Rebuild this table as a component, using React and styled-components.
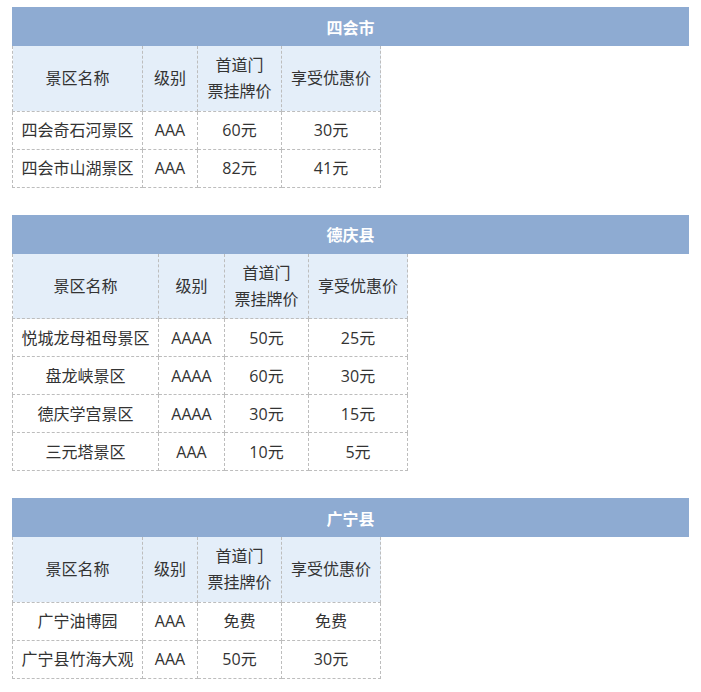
import React from 'react';
import styled, { createGlobalStyle } from 'styled-components';

const GlobalStyle = createGlobalStyle`
  body {
    margin: 0;
    background: #fff;
    font-family: "Open Sans", "Noto Sans CJK SC", sans-serif;
    color: #333;
  }
`;

const Page = styled.div`
  padding: 7px 12px 12px;
  display: flex;
  flex-direction: column;
  gap: 27px;
`;

const Section = styled.section`
  display: flex;
  flex-direction: column;
`;

const TitleBar = styled.div`
  height: 39px;
  background: #8eabd2;
  color: #fff;
  font-size: 16px;
  font-weight: 700;
  display: flex;
  align-items: center;
  justify-content: center;
`;

const Table = styled.table`
  border-collapse: collapse;
  table-layout: fixed;
  font-size: 16px;
  line-height: 26px;
  color: #333;
`;

const Th = styled.th`
  font-weight: 400;
  background: #e4eef9;
  border: 1px dashed #bdbdbd;
  border-top: none;
  height: 65px;
  padding: 0 4px;
  text-align: center;
  box-sizing: border-box;
  white-space: nowrap;
`;

const Td = styled.td`
  border: 1px dashed #bdbdbd;
  height: 38px;
  padding: 0 4px;
  text-align: center;
  white-space: nowrap;
  box-sizing: border-box;
`;

const regions = [
  {
    name: '四会市',
    cols: [130, 55, 84, 99],
    rows: [
      ['四会奇石河景区', 'AAA', '60元', '30元'],
      ['四会市山湖景区', 'AAA', '82元', '41元'],
    ],
  },
  {
    name: '德庆县',
    cols: [146, 66, 84, 99],
    rows: [
      ['悦城龙母祖母景区', 'AAAA', '50元', '25元'],
      ['盘龙峡景区', 'AAAA', '60元', '30元'],
      ['德庆学宫景区', 'AAAA', '30元', '15元'],
      ['三元塔景区', 'AAA', '10元', '5元'],
    ],
  },
  {
    name: '广宁县',
    cols: [130, 55, 84, 99],
    rows: [
      ['广宁油博园', 'AAA', '免费', '免费'],
      ['广宁县竹海大观', 'AAA', '50元', '30元'],
    ],
  },
];

const RegionTable = ({ region }) => {
  const total = region.cols.reduce((a, b) => a + b, 0);
  return (
    <Section>
      <TitleBar>{region.name}</TitleBar>
      <Table style={{ width: total }}>
        <colgroup>
          {region.cols.map((w, i) => (
            <col key={i} style={{ width: w }} />
          ))}
        </colgroup>
        <thead>
          <tr>
            <Th>景区名称</Th>
            <Th>级别</Th>
            <Th>
              首道门
              <br />
              票挂牌价
            </Th>
            <Th>享受优惠价</Th>
          </tr>
        </thead>
        <tbody>
          {region.rows.map((row, i) => (
            <tr key={i}>
              {row.map((cell, j) => (
                <Td key={j}>{cell}</Td>
              ))}
            </tr>
          ))}
        </tbody>
      </Table>
    </Section>
  );
};

export default function App() {
  return (
    <>
      <GlobalStyle />
      <Page>
        {regions.map((r) => (
          <RegionTable key={r.name} region={r} />
        ))}
      </Page>
    </>
  );
}
